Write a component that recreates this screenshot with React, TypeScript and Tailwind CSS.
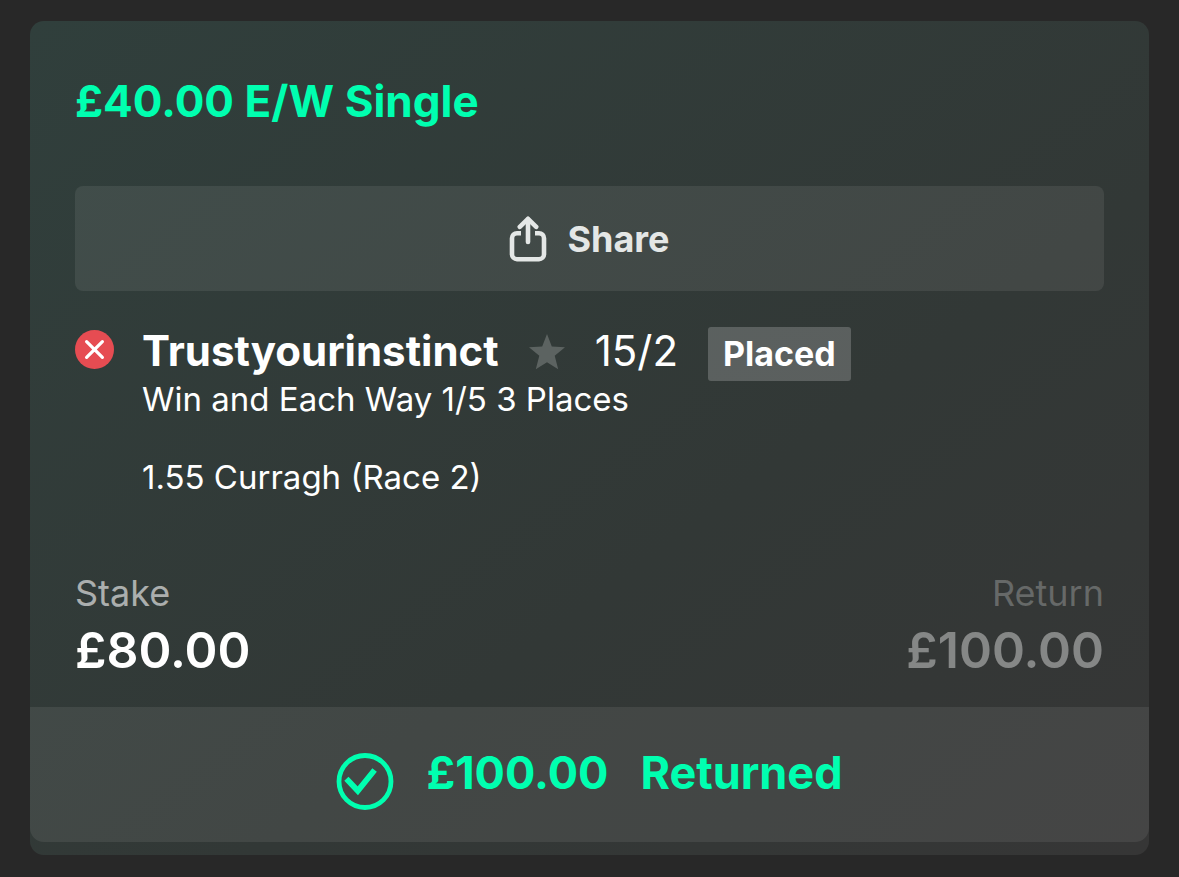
const ShareIcon = () => (
    <svg viewBox="0 0 38 46" className="h-[46px] w-[38px]" fill="none" stroke="currentColor" strokeWidth="4.6" aria-hidden="true">
        <path d="M12 17.2H8a5 5 0 0 0-5 5v16a5 5 0 0 0 5 5h22a5 5 0 0 0 5-5v-16a5 5 0 0 0-5-5h-4" />
        <path d="M19 26V3.5" strokeLinecap="round" />
        <path d="M10.8 10.8 19 2.8l8.2 8" strokeLinecap="round" strokeLinejoin="round" />
    </svg>
);

const LostIcon = () => (
    <svg viewBox="0 0 39 39" className="mt-[3px] size-[39px] shrink-0" role="img" aria-label="Lost">
        <circle cx="19.5" cy="19.5" r="19.5" fill="#e64c52" />
        <path d="M11.6 11.6 27.4 27.4M27.4 11.6 11.6 27.4" stroke="#fff" strokeWidth="3.2" strokeLinecap="round" />
    </svg>
);

const StarIcon = () => (
    <svg viewBox="0 0 36 36" className="size-9" fill="#5c6361" aria-hidden="true">
        <path d="M18 0 22.8 12.6 36 13.2 25.7 21.8 29.2 35.3 18 28.2 6.8 35.3 10.3 21.8 0 13.2 13.2 12.6Z" />
    </svg>
);

const TickIcon = () => (
    <svg viewBox="0 0 58 58" className="mt-px size-[58px] shrink-0" fill="none" stroke="currentColor" aria-hidden="true">
        <circle cx="29" cy="28.5" r="26" strokeWidth="4.8" />
        <path d="M10.4 25.8 21.8 37.8 38.6 17" strokeWidth="5.8" />
    </svg>
);

const Selection: React.FC = () => (
    <div className="mt-9 flex items-start gap-7">
        <LostIcon />

        <div className="min-w-0">
            <div className="flex items-start text-white">
                <h2 className="text-[42px] font-bold leading-[48px]">Trustyourinstinct</h2>
                <button type="button" aria-label="Favourite" className="ml-[30px] mt-[7px]">
                    <StarIcon />
                </button>
                <span className="ml-[30px] text-[42px] leading-[48px]">15/2</span>
                <span className="ml-[30px] rounded-[3px] bg-white/20 px-[15px] text-[34px] font-bold leading-[54px]">Placed</span>
            </div>
            <p className="text-[33px] leading-9 text-white">Win and Each Way 1/5 3 Places</p>
            <p className="mt-[42px] text-[33px] leading-9 text-white">1.55 Curragh (Race 2)</p>
        </div>
    </div>
);

const Totals: React.FC = () => (
    <dl className="mt-[74px] flex justify-between pb-6">
        <div>
            <dt className="text-[36px] leading-[48px] text-white/60">Stake</dt>
            <dd className="text-[50px] font-semibold leading-[66px] text-white">£80.00</dd>
        </div>
        <div className="text-right">
            <dt className="text-[36px] leading-[48px] text-white/25">Return</dt>
            <dd className="text-[50px] font-semibold leading-[66px] text-white/40">£100.00</dd>
        </div>
    </dl>
);

const App: React.FC = () => {
    return (
        <main className="min-h-screen bg-[#282828] px-[30px] py-[21px] font-['Inter',sans-serif]">
            <article className="rounded-[14px] bg-linear-to-br from-[#303f3c] via-[#323836] via-60% to-[#363636] pb-[13px]">
                <div className="px-[45px] pt-[54px]">
                    <h1 className="text-[44px] font-bold leading-[52px] text-[#00ffb0]">£40.00 E/W Single</h1>

                    <button type="button" className="mt-[59px] flex h-[105px] w-full items-center justify-center gap-5 rounded-lg bg-white/8 text-[36px] font-bold text-[#e4e7e6]">
                        <ShareIcon />
                        Share
                    </button>

                    <Selection />
                    <Totals />
                </div>

                <footer className="flex items-start justify-center rounded-b-[14px] bg-white/8 pb-[31px] pt-[45px] text-[45px] font-bold leading-[42px] text-[#00ffb0]">
                    <TickIcon />
                    <span className="ml-8">£100.00</span>
                    <span className="ml-8">Returned</span>
                </footer>
            </article>
        </main>
    );
};

export default App;
